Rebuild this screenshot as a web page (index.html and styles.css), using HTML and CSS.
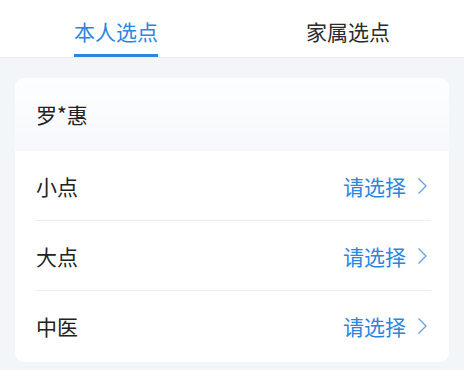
FILE: index.html
```html
<!DOCTYPE html>
<html lang="zh-CN">
<head>
    <meta charset="UTF-8">
    <meta name="viewport" content="width=device-width, initial-scale=1.0">
    <title>选点</title>
    <link rel="stylesheet" href="styles.css">
</head>
<body>

    <!-- Tabs -->
    <div class="tabs">
        <div class="tab active"><span>本人选点</span></div>
        <div class="tab"><span>家属选点</span></div>
    </div>

    <!-- Card -->
    <div class="card">
        <div class="card-head">罗*惠</div>
        <div class="row">
            <span class="label">小点</span>
            <span class="pick">请选择
                <svg class="arrow" width="11" height="18" viewBox="0 0 11 18"><path d="M1.5 1.5 L9 9 L1.5 16.5" fill="none" stroke="#6ea3dc" stroke-width="1.4"/></svg>
            </span>
        </div>
        <div class="row">
            <span class="label">大点</span>
            <span class="pick">请选择
                <svg class="arrow" width="11" height="18" viewBox="0 0 11 18"><path d="M1.5 1.5 L9 9 L1.5 16.5" fill="none" stroke="#6ea3dc" stroke-width="1.4"/></svg>
            </span>
        </div>
        <div class="row">
            <span class="label">中医</span>
            <span class="pick">请选择
                <svg class="arrow" width="11" height="18" viewBox="0 0 11 18"><path d="M1.5 1.5 L9 9 L1.5 16.5" fill="none" stroke="#6ea3dc" stroke-width="1.4"/></svg>
            </span>
        </div>
    </div>

</body>
</html>
```

FILE: styles.css
```css
body {
    font-family: "Noto Sans CJK SC", "Noto Sans", sans-serif;
    margin: 0;
    background-color: #f3f6f9;
    color: #222;
}

.tabs {
    display: flex;
    height: 57px;
    background-color: #fff;
    border-bottom: 1px solid #e9ecf1;
}

.tab {
    flex: 1;
    display: flex;
    justify-content: center;
    font-size: 21px;
    color: #2b2b2b;
}

.tab span {
    display: block;
    padding-top: 16px;
    line-height: 30px;
    height: 41px;
}

.tab.active span {
    color: #2a86e0;
    border-bottom: 3px solid #2a86e0;
    height: 38px;
}

.card {
    margin: 20px 15px 0;
    background-color: #fff;
    border-radius: 9px;
    overflow: hidden;
    padding-bottom: 1px;
}

.card-head {
    height: 73px;
    line-height: 73px;
    padding-left: 21px;
    font-size: 21px;
    background: linear-gradient(#fdfeff, #f6f9fc);
}

.row {
    display: flex;
    align-items: center;
    justify-content: space-between;
    height: 70px;
    margin: 0 18px 0 20px;
    border-bottom: 1px solid #ebedf0;
    box-sizing: border-box;
    font-size: 21px;
}

.row:first-of-type {
    height: 71px;
}

.row:last-child {
    border-bottom: none;
}

.label {
    padding-left: 1px;
}

.pick {
    display: flex;
    align-items: center;
    color: #2a86e0;
    padding-right: 3px;
}

.arrow {
    margin-left: 11px;
}
```
